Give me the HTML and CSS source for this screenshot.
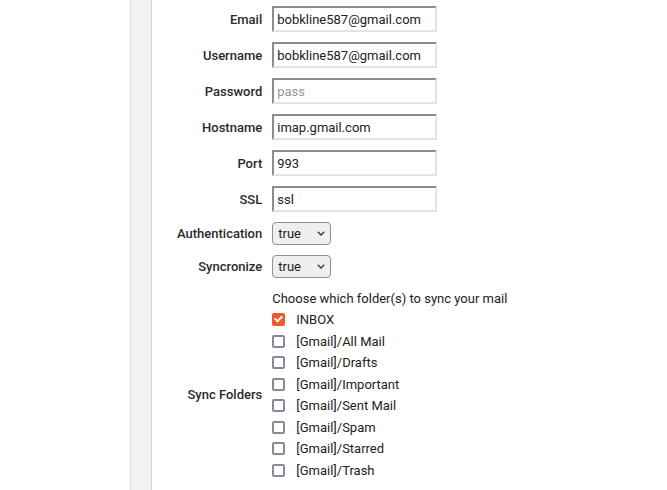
FILE: index.html
```html
<!DOCTYPE html>
<html lang="en">
<head>
    <meta charset="UTF-8">
    <meta name="viewport" content="width=device-width, initial-scale=1.0">
    <title>Mail account</title>
    <link rel="stylesheet" href="styles.css">
</head>
<body>
    <div id="page">
        <div class="gutter"></div>
        <div class="rail"></div>
        <div class="content">
            <table class="account-form">
                <tr>
                    <td class="label">Email</td>
                    <td><input type="text" value="bobkline587@gmail.com"></td>
                </tr>
                <tr>
                    <td class="label">Username</td>
                    <td><input type="text" value="bobkline587@gmail.com"></td>
                </tr>
                <tr>
                    <td class="label">Password</td>
                    <td><input type="password" placeholder="pass"></td>
                </tr>
                <tr>
                    <td class="label">Hostname</td>
                    <td><input type="text" value="imap.gmail.com"></td>
                </tr>
                <tr>
                    <td class="label">Port</td>
                    <td><input type="text" value="993"></td>
                </tr>
                <tr>
                    <td class="label">SSL</td>
                    <td><input type="text" value="ssl"></td>
                </tr>
                <tr>
                    <td class="label">Authentication</td>
                    <td>
                        <div class="select-wrap">
                            <select>
                                <option>true</option>
                                <option>false</option>
                            </select>
                            <svg class="chevron" width="8" height="5" viewBox="0 0 8 5"><path d="M0.8 0.8 L4 4 L7.2 0.8" fill="none" stroke="#333" stroke-width="1.3"/></svg>
                        </div>
                    </td>
                </tr>
                <tr>
                    <td class="label">Syncronize</td>
                    <td>
                        <div class="select-wrap">
                            <select>
                                <option>true</option>
                                <option>false</option>
                            </select>
                            <svg class="chevron" width="8" height="5" viewBox="0 0 8 5"><path d="M0.8 0.8 L4 4 L7.2 0.8" fill="none" stroke="#333" stroke-width="1.3"/></svg>
                        </div>
                    </td>
                </tr>
                <tr>
                    <td class="label">Sync Folders</td>
                    <td>
                        <div class="folders">
                            <p class="hint">Choose which folder(s) to sync your mail</p>
                            <label class="folder"><input type="checkbox" checked> INBOX</label>
                            <label class="folder"><input type="checkbox"> [Gmail]/All Mail</label>
                            <label class="folder"><input type="checkbox"> [Gmail]/Drafts</label>
                            <label class="folder"><input type="checkbox"> [Gmail]/Important</label>
                            <label class="folder"><input type="checkbox"> [Gmail]/Sent Mail</label>
                            <label class="folder"><input type="checkbox"> [Gmail]/Spam</label>
                            <label class="folder"><input type="checkbox"> [Gmail]/Starred</label>
                            <label class="folder"><input type="checkbox"> [Gmail]/Trash</label>
                        </div>
                    </td>
                </tr>
            </table>
        </div>
    </div>
</body>
</html>
```

FILE: styles.css
```css
body {
    font-family: Roboto, "Liberation Sans", sans-serif;
    font-size: 13px;
    color: #222;
    margin: 0;
    background: #fff;
}

#page {
    display: flex;
    min-height: 100vh;
}

.gutter {
    width: 130px;
    flex-shrink: 0;
}

.rail {
    width: 20px;
    flex-shrink: 0;
    background: #f2f2f2;
    border-left: 1px solid #e0e0e0;
    border-right: 1px solid #d4d4d4;
}

.content {
    padding: 1px 20px 0 20px;
}

.account-form {
    border-collapse: collapse;
}

.account-form td {
    padding: 5px;
    vertical-align: middle;
}

.account-form td.label {
    text-align: right;
    font-weight: 500;
    color: #2a2a2a;
    white-space: nowrap;
}

input[type="text"],
input[type="password"] {
    width: 165px;
    height: 26px;
    box-sizing: border-box;
    margin: 0;
    padding: 1px 3px;
    font-family: Roboto, "Liberation Sans", sans-serif;
    font-size: 13px;
    color: #222;
    border: 2px solid #e3e3e3;
    border-top-color: #8d8d8d;
    border-left-color: #8d8d8d;
    display: block;
}

input::placeholder {
    color: #9a9a9a;
}

.select-wrap {
    position: relative;
    width: 59px;
}

select {
    display: block;
    appearance: none;
    -webkit-appearance: none;
    height: 23px;
    width: 59px;
    margin: 0;
    padding: 0 0 0 5px;
    font-family: Roboto, "Liberation Sans", sans-serif;
    font-size: 13px;
    color: #222;
    background: #efefef;
    border: 1px solid #8e8e98;
    border-radius: 4px;
}

.chevron {
    position: absolute;
    left: 45px;
    top: 9px;
    pointer-events: none;
}

.folders {
    padding: 1px 0 20px;
}

.hint {
    margin: 0;
    line-height: 20px;
}

.folder {
    display: flex;
    align-items: center;
    gap: 11px;
    height: 21.5px;
}

.folder input {
    appearance: none;
    -webkit-appearance: none;
    position: relative;
    box-sizing: border-box;
    margin: 0;
    width: 13px;
    height: 13px;
    border: 2px solid #8b8898;
    border-radius: 2px;
    background: #fff;
}

.folder input:checked {
    background: #f1582a;
    border-color: #f1582a;
}

.folder input:checked::after {
    content: "";
    position: absolute;
    left: 2px;
    top: -1px;
    width: 3px;
    height: 6px;
    border: solid #fff;
    border-width: 0 2px 2px 0;
    transform: rotate(45deg);
}
```
